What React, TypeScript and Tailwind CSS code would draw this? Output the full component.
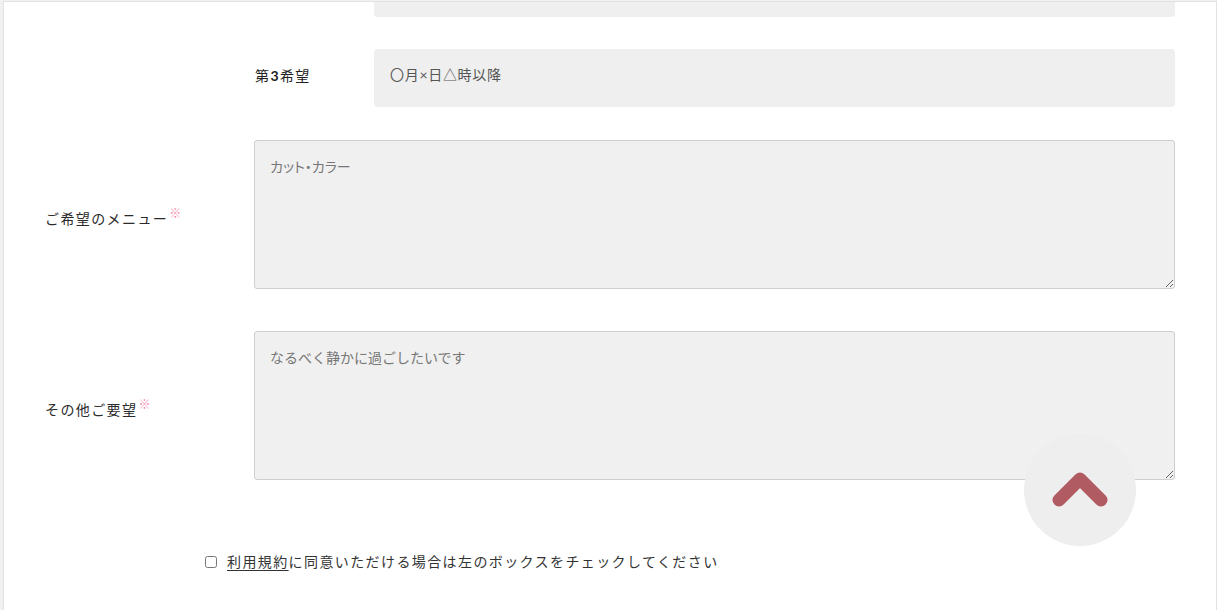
import React from "react";

const jp = "font-['Lato','Noto_Sans_CJK_JP',sans-serif]";

function Label({ text, required }: { text: string; required?: boolean }) {
  return (
    <div className="w-[209px] shrink-0 pt-[8px] text-[14px] tracking-[0.1em] text-[#2a2a2a]">
      {text}
      {required && <sup className="ml-px text-[12px] font-bold text-[#f48aad] tracking-normal">※</sup>}
    </div>
  );
}

export default function App() {
  return (
    <div className={`h-[610px] overflow-hidden bg-[#f1f1f1] pl-[3px] pt-px ${jp}`}>
      <div className="relative h-[620px] overflow-hidden border-l border-r border-t border-[#e2e2e2] bg-white pl-[41px] pr-[41px]">
        {/* 第2希望 (scrolled off, only the bottom shows) */}
        <div className="-mt-[43px] flex">
          <div className="w-[329px] shrink-0" />
          <input className="h-[58px] flex-1 rounded-[4px] bg-[#efefef] outline-none" />
        </div>

        {/* 第3希望 */}
        <div className="mt-[32px] flex items-center">
          <div className="w-[209px] shrink-0" />
          <div className="w-[120px] shrink-0 pb-[6px] pl-px text-[14px] tracking-[0.1em] text-[#222]">
            第<span className="font-bold">3</span>希望
          </div>
          <input
            className="h-[58px] flex-1 rounded-[4px] bg-[#efefef] pb-[7px] pl-[16px] text-[14px] tracking-[0.05em] outline-none placeholder:text-[#555]"
            placeholder="〇月×日△時以降"
          />
        </div>

        {/* ご希望のメニュー */}
        <div className="mt-[33px] flex items-center">
          <Label text="ご希望のメニュー" required />
          <textarea
            className="h-[149px] flex-1 rounded-[3px] border border-[#cfcfcf] bg-[#f0f0f0] px-[15px] pt-[16px] text-[14px] leading-[20px] outline-none [font-feature-settings:'palt'] placeholder:text-[#777]"
            placeholder="カット・カラー"
          />
        </div>

        {/* その他ご要望 */}
        <div className="mt-[42px] flex items-center">
          <Label text="その他ご要望" required />
          <textarea
            className="h-[149px] flex-1 rounded-[3px] border border-[#cfcfcf] bg-[#f0f0f0] px-[15px] pt-[16px] text-[14px] leading-[20px] outline-none placeholder:text-[#777]"
            placeholder="なるべく静かに過ごしたいです"
          />
        </div>

        {/* 同意チェック */}
        <div className="mt-[71px] flex items-center pl-[160px] text-[14px] tracking-[0.1em] text-[#333]">
          <input type="checkbox" className="m-0 h-[12px] w-[12px]" />
          <span className="ml-[10px]">
            <span className="underline underline-offset-[3px]">利用規約</span>
            に同意いただける場合は左のボックスをチェックしてください
          </span>
        </div>

        {/* page top button */}
        <button className="absolute left-[1020px] top-[432px] flex h-[112px] w-[112px] items-center justify-center rounded-full bg-[#eeeeee]">
          <svg width="56" height="40" viewBox="0 0 56 40">
            <polyline
              points="7,30 28,9 49,30"
              fill="none"
              stroke="#b05a61"
              strokeWidth="13"
              strokeLinecap="round"
              strokeLinejoin="round"
            />
          </svg>
        </button>
      </div>
    </div>
  );
}
